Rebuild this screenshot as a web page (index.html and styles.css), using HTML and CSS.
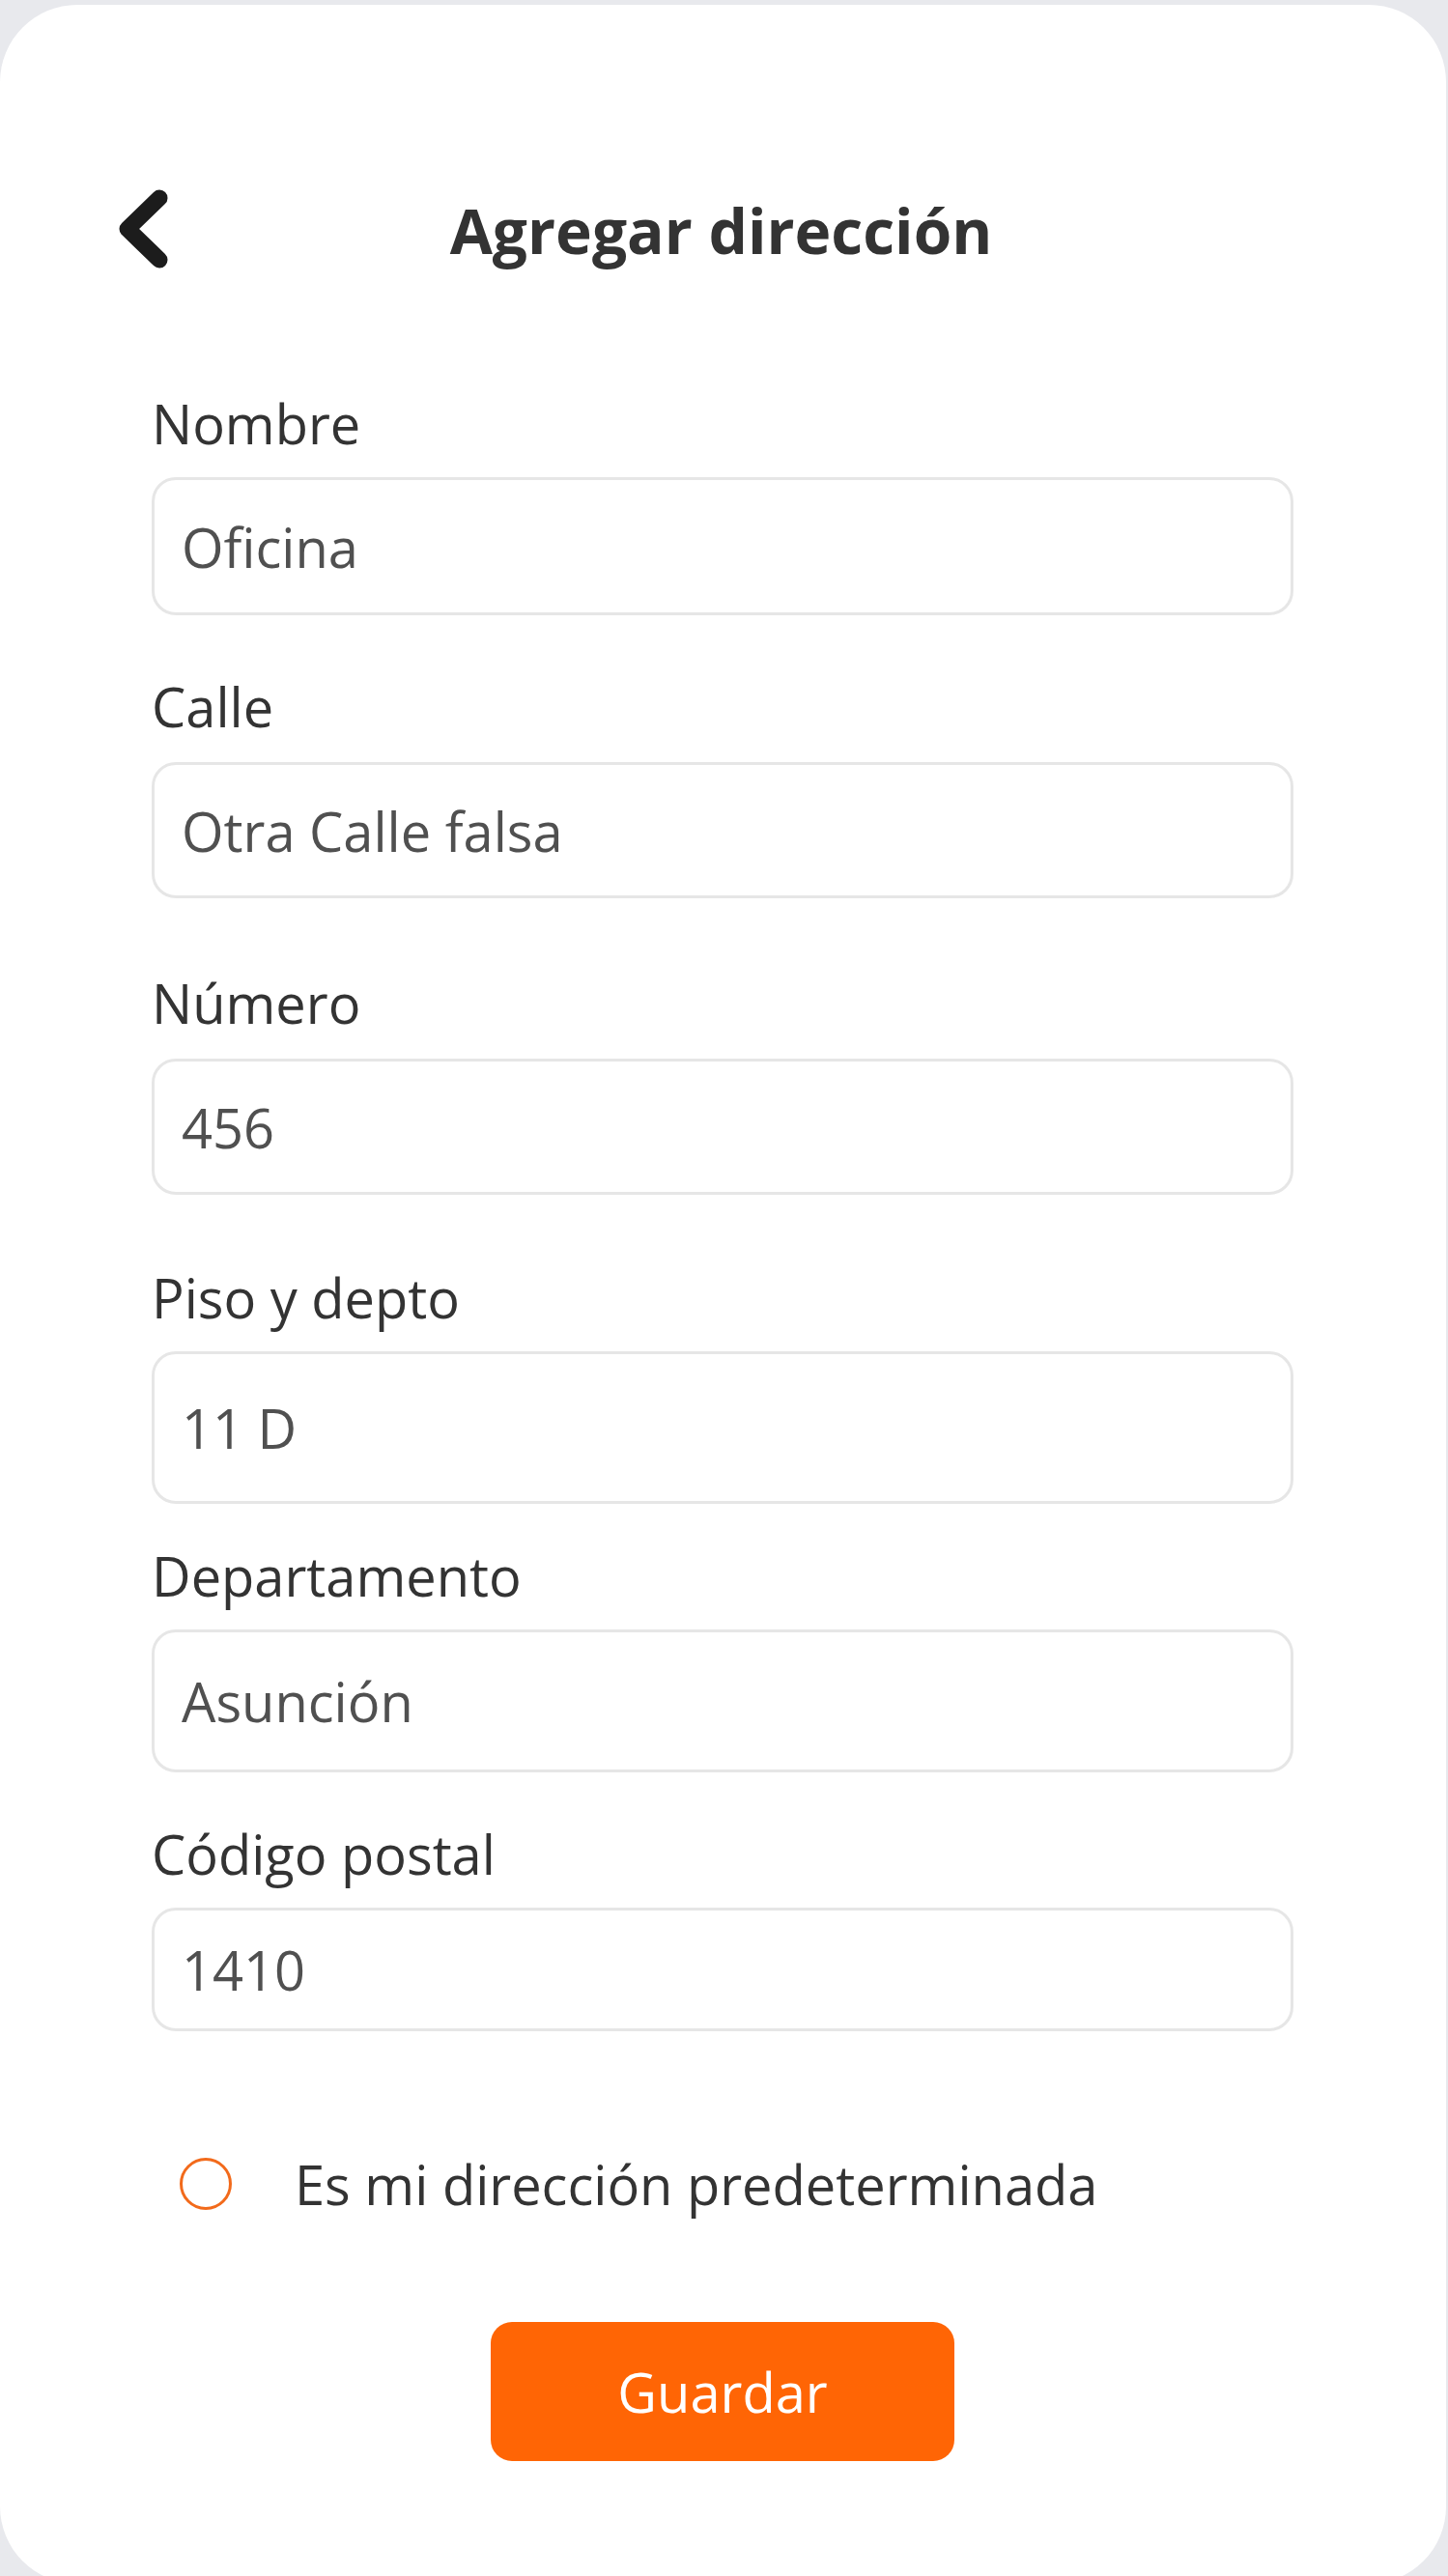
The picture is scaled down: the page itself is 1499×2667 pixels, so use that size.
FILE: index.html
```html
<!DOCTYPE html>
<html lang="es">
<head>
<meta charset="utf-8">
<title>Agregar dirección</title>
<link rel="stylesheet" href="styles.css">
</head>
<body>
<main class="card">
  <header class="header">
    <button class="back" aria-label="Volver">
      <svg class="back-icon" width="60" height="90" viewBox="0 0 60 90" aria-hidden="true">
        <polyline points="51,12 18,44 51,76" fill="none" stroke="#1c1c1c" stroke-width="17" stroke-linecap="round" stroke-linejoin="round"/>
      </svg>
    </button>
    <h1 class="title">Agregar dirección</h1>
    <span class="spacer"></span>
  </header>

  <form class="form">
    <div class="group g1">
      <label class="label">Nombre</label>
      <div class="field h143">Oficina</div>
    </div>
    <div class="group g2">
      <label class="label label--loose">Calle</label>
      <div class="field h141">Otra Calle falsa</div>
    </div>
    <div class="group g3">
      <label class="label label--loose">Número</label>
      <div class="field h141">456</div>
    </div>
    <div class="group g4">
      <label class="label">Piso y depto</label>
      <div class="field h158">11 D</div>
    </div>
    <div class="group g5">
      <label class="label">Departamento</label>
      <div class="field h148">Asunción</div>
    </div>
    <div class="group g6">
      <label class="label">Código postal</label>
      <div class="field h128">1410</div>
    </div>

    <div class="radio-row">
      <span class="radio"></span>
      <span class="radio-text">Es mi dirección predeterminada</span>
    </div>

    <div class="actions">
      <button type="button" class="save">Guardar</button>
    </div>
  </form>
</main>
</body>
</html>
```

FILE: styles.css
```css
html, body {
  margin: 0;
  padding: 0;
  overflow: hidden;
}

body {
  background: #e8e9ed;
  font-family: "Open Sans", "Noto Sans", sans-serif;
  color: #333333;
}

.card {
  box-sizing: border-box;
  width: 1497px;
  margin-top: 5px;
  background: #ffffff;
  border-radius: 80px;
  padding: 183px 158px 127px 157px;
  min-height: 2670px;
}

.header {
  display: grid;
  grid-template-columns: 1fr auto 1fr;
  align-items: center;
  height: 100px;
  margin-left: -43px;
}

.back {
  justify-self: start;
  display: flex;
  align-items: center;
  padding: 0;
  border: 0;
  background: none;
  width: 60px;
  height: 90px;
}

.back-icon {
  display: block;
}

.title {
  margin: 0;
  font-size: 64px;
  font-weight: 700;
  color: #333333;
  white-space: nowrap;
  transform: translateX(20px);
}

.form {
  display: flex;
  flex-direction: column;
  margin-top: 118px;
}

.group {
  display: flex;
  flex-direction: column;
}

.g2 { margin-top: 62px; }
.g3 { margin-top: 76px; }
.g4 { margin-top: 74px; }
.g5 { margin-top: 42px; }
.g6 { margin-top: 52px; }

.label {
  font-size: 56px;
  line-height: 64px;
  color: #333333;
  margin-bottom: 24px;
}

.label--loose {
  margin-bottom: 26px;
}

.field {
  box-sizing: border-box;
  display: flex;
  align-items: center;
  border: 3px solid #e6e6e6;
  border-radius: 25px;
  padding-left: 28px;
  font-size: 56px;
  color: #505050;
}

.h128 { height: 128px; }
.h141 { height: 141px; }
.h143 { height: 143px; }
.h148 { height: 148px; }
.h158 { height: 158px; }

.radio-row {
  display: flex;
  align-items: center;
  margin-top: 120px;
  padding-left: 29px;
  gap: 65px;
}

.radio {
  box-sizing: border-box;
  width: 54px;
  height: 54px;
  border: 3px solid #f26a1b;
  border-radius: 50%;
  flex: none;
}

.radio-text {
  font-size: 56px;
  color: #333333;
}

.actions {
  display: flex;
  justify-content: center;
  margin-top: 105px;
}

.save {
  width: 480px;
  height: 144px;
  border: 0;
  border-radius: 22px;
  background: #ff6505;
  color: #ffffff;
  font-family: "Open Sans", "Noto Sans", sans-serif;
  font-size: 56px;
  padding: 0;
}
```
